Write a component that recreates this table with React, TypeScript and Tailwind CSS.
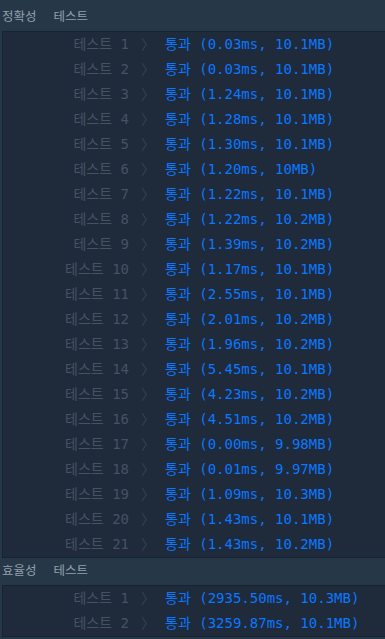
const ACCURACY = [
  '0.03ms, 10.1MB',
  '0.03ms, 10.1MB',
  '1.24ms, 10.1MB',
  '1.28ms, 10.1MB',
  '1.30ms, 10.1MB',
  '1.20ms, 10MB',
  '1.22ms, 10.1MB',
  '1.22ms, 10.2MB',
  '1.39ms, 10.2MB',
  '1.17ms, 10.1MB',
  '2.55ms, 10.1MB',
  '2.01ms, 10.2MB',
  '1.96ms, 10.2MB',
  '5.45ms, 10.1MB',
  '4.23ms, 10.2MB',
  '4.51ms, 10.2MB',
  '0.00ms, 9.98MB',
  '0.01ms, 9.97MB',
  '1.09ms, 10.3MB',
  '1.43ms, 10.1MB',
  '1.43ms, 10.2MB',
]

const EFFICIENCY = ['2935.50ms, 10.3MB', '3259.87ms, 10.1MB']

const mono = "font-['DejaVu_Sans_Mono','Noto_Sans_CJK_KR',monospace]"

function Row({ n, result }: { n: number; result: string }) {
  return (
    <div className="flex h-[25px] items-center text-[14px] whitespace-pre">
      <div className="w-[152px] shrink-0 text-right text-[#465264]">
        테스트 {n}
        <span className="ml-[12px] text-[#364252]">〉</span>
      </div>
      <div className="pl-[10px] text-[#0a78ff]">통과 ({result})</div>
    </div>
  )
}

function Section({ title, results }: { title: string; results: string[] }) {
  return (
    <>
      <div className="flex h-[27px] items-center gap-[17px] pl-[2px] text-[12.5px] text-[#93a0ad]">
        <span>{title}</span>
        <span>테스트</span>
      </div>
      <div className="ml-[2px] border border-r-0 border-[#172233] bg-[#1f2a3b]">
        {results.map((r, i) => (
          <Row key={i} n={i + 1} result={r} />
        ))}
      </div>
    </>
  )
}

export default function App() {
  return (
    <div className={`${mono} h-[639px] w-[385px] overflow-hidden bg-[#263747] pt-[4px]`}>
      <Section title="정확성" results={ACCURACY} />
      <Section title="효율성" results={EFFICIENCY} />
    </div>
  )
}
